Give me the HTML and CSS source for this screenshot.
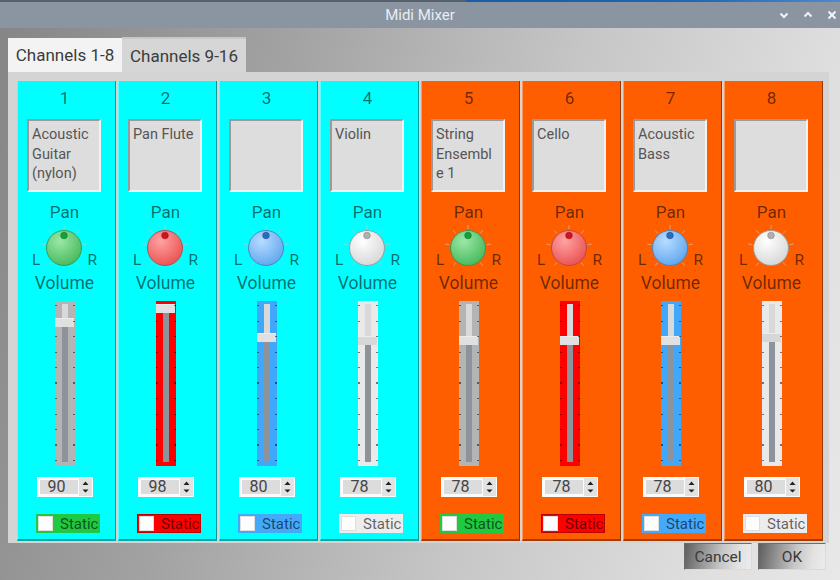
FILE: index.html
```html
<!DOCTYPE html>
<html>
<head>
<meta charset="utf-8">
<link rel="stylesheet" href="styles.css">
</head>
<body>
<svg class="defs" width="0" height="0">
  <defs>
    <radialGradient id="gGreen" cx="0.38" cy="0.3" r="0.75"><stop offset="0" stop-color="#9be8a7"/><stop offset="1" stop-color="#45b85b"/></radialGradient>
    <radialGradient id="gRed" cx="0.38" cy="0.3" r="0.75"><stop offset="0" stop-color="#ffa3a3"/><stop offset="1" stop-color="#ea5050"/></radialGradient>
    <radialGradient id="gBlue" cx="0.38" cy="0.3" r="0.75"><stop offset="0" stop-color="#b8dcff"/><stop offset="1" stop-color="#5ea6ee"/></radialGradient>
    <radialGradient id="gWhite" cx="0.38" cy="0.3" r="0.75"><stop offset="0" stop-color="#ffffff"/><stop offset="1" stop-color="#d6d6d6"/></radialGradient>
  </defs>
</svg>
<div class="topstrip"><span class="ts-blue"></span></div>
<div class="titlebar">
  <span></span>
  <span class="title">Midi Mixer</span>
  <div class="wbtns">
    <svg width="10" height="8" viewBox="0 0 10 8"><path d="M1.5 2.5 L5 6 L8.5 2.5" fill="none" stroke="#f2f4f6" stroke-width="2"/></svg>
    <svg width="10" height="8" viewBox="0 0 10 8"><path d="M1.5 5.5 L5 2 L8.5 5.5" fill="none" stroke="#f2f4f6" stroke-width="2"/></svg>
    <svg width="10" height="10" viewBox="0 0 10 10"><path d="M1.5 1.5 L8.5 8.5 M8.5 1.5 L1.5 8.5" fill="none" stroke="#f2f4f6" stroke-width="2"/></svg>
  </div>
</div>
<div class="window">
  <div class="tabs">
    <div class="tab active">Channels 1-8</div>
    <div class="tab">Channels 9-16</div>
  </div>
  <div class="pane">

    <div class="ch cyan">
      <div class="num">1</div>
      <div class="name">Acoustic<br>Guitar<br>(nylon)</div>
      <div class="lbl pan">Pan</div>
      <div class="knobrow"><span>L</span>
        <svg class="knob green" viewBox="-18 -18 36 36" width="36" height="36"><g class="ticks"><line x1="0" y1="-19" x2="0" y2="-23"/><line x1="12.2" y1="-14.6" x2="14.8" y2="-17.6"/><line x1="-12.2" y1="-14.6" x2="-14.8" y2="-17.6"/><line x1="18.7" y1="-3.3" x2="22.6" y2="-4"/><line x1="-18.7" y1="-3.3" x2="-22.6" y2="-4"/><line x1="12.2" y1="14.6" x2="14.8" y2="17.6"/><line x1="-12.2" y1="14.6" x2="-14.8" y2="17.6"/></g><circle class="body" r="17.5"/><circle class="dot" cy="-12.5" r="3.3"/></svg>
        <span>R</span></div>
      <div class="lbl vol">Volume</div>
      <div class="slider sgray" style="--pos:17px"><i class="groove"></i><i class="handle"></i></div>
      <div class="spin"><span class="val">90</span><span class="arrows"><svg width="13" height="18" viewBox="0 0 13 18"><path d="M3.5 7 L6.5 3.5 L9.5 7 Z M3.5 11.5 L9.5 11.5 L6.5 14.5 Z" fill="#222"/></svg></span></div>
      <div class="static cgreen"><span class="box"></span>Static</div>
    </div>

    <div class="ch cyan">
      <div class="num">2</div>
      <div class="name">Pan Flute</div>
      <div class="lbl pan">Pan</div>
      <div class="knobrow"><span>L</span>
        <svg class="knob red" viewBox="-18 -18 36 36" width="36" height="36"><g class="ticks"><line x1="0" y1="-19" x2="0" y2="-23"/><line x1="12.2" y1="-14.6" x2="14.8" y2="-17.6"/><line x1="-12.2" y1="-14.6" x2="-14.8" y2="-17.6"/><line x1="18.7" y1="-3.3" x2="22.6" y2="-4"/><line x1="-18.7" y1="-3.3" x2="-22.6" y2="-4"/><line x1="12.2" y1="14.6" x2="14.8" y2="17.6"/><line x1="-12.2" y1="14.6" x2="-14.8" y2="17.6"/></g><circle class="body" r="17.5"/><circle class="dot" cy="-12.5" r="3.3"/></svg>
        <span>R</span></div>
      <div class="lbl vol">Volume</div>
      <div class="slider sred" style="--pos:3px"><i class="groove"></i><i class="handle"></i></div>
      <div class="spin"><span class="val">98</span><span class="arrows"><svg width="13" height="18" viewBox="0 0 13 18"><path d="M3.5 7 L6.5 3.5 L9.5 7 Z M3.5 11.5 L9.5 11.5 L6.5 14.5 Z" fill="#222"/></svg></span></div>
      <div class="static cred"><span class="box"></span>Static</div>
    </div>

    <div class="ch cyan">
      <div class="num">3</div>
      <div class="name"></div>
      <div class="lbl pan">Pan</div>
      <div class="knobrow"><span>L</span>
        <svg class="knob blue" viewBox="-18 -18 36 36" width="36" height="36"><g class="ticks"><line x1="0" y1="-19" x2="0" y2="-23"/><line x1="12.2" y1="-14.6" x2="14.8" y2="-17.6"/><line x1="-12.2" y1="-14.6" x2="-14.8" y2="-17.6"/><line x1="18.7" y1="-3.3" x2="22.6" y2="-4"/><line x1="-18.7" y1="-3.3" x2="-22.6" y2="-4"/><line x1="12.2" y1="14.6" x2="14.8" y2="17.6"/><line x1="-12.2" y1="14.6" x2="-14.8" y2="17.6"/></g><circle class="body" r="17.5"/><circle class="dot" cy="-12.5" r="3.3"/></svg>
        <span>R</span></div>
      <div class="lbl vol">Volume</div>
      <div class="slider sblue" style="--pos:32px"><i class="groove"></i><i class="handle"></i></div>
      <div class="spin"><span class="val">80</span><span class="arrows"><svg width="13" height="18" viewBox="0 0 13 18"><path d="M3.5 7 L6.5 3.5 L9.5 7 Z M3.5 11.5 L9.5 11.5 L6.5 14.5 Z" fill="#222"/></svg></span></div>
      <div class="static cblue"><span class="box"></span>Static</div>
    </div>

    <div class="ch cyan">
      <div class="num">4</div>
      <div class="name">Violin</div>
      <div class="lbl pan">Pan</div>
      <div class="knobrow"><span>L</span>
        <svg class="knob white" viewBox="-18 -18 36 36" width="36" height="36"><g class="ticks"><line x1="0" y1="-19" x2="0" y2="-23"/><line x1="12.2" y1="-14.6" x2="14.8" y2="-17.6"/><line x1="-12.2" y1="-14.6" x2="-14.8" y2="-17.6"/><line x1="18.7" y1="-3.3" x2="22.6" y2="-4"/><line x1="-18.7" y1="-3.3" x2="-22.6" y2="-4"/><line x1="12.2" y1="14.6" x2="14.8" y2="17.6"/><line x1="-12.2" y1="14.6" x2="-14.8" y2="17.6"/></g><circle class="body" r="17.5"/><circle class="dot" cy="-12.5" r="3.3"/></svg>
        <span>R</span></div>
      <div class="lbl vol">Volume</div>
      <div class="slider slight" style="--pos:35px"><i class="groove"></i><i class="handle"></i></div>
      <div class="spin"><span class="val">78</span><span class="arrows"><svg width="13" height="18" viewBox="0 0 13 18"><path d="M3.5 7 L6.5 3.5 L9.5 7 Z M3.5 11.5 L9.5 11.5 L6.5 14.5 Z" fill="#222"/></svg></span></div>
      <div class="static clight"><span class="box"></span>Static</div>
    </div>

    <div class="ch orange">
      <div class="num">5</div>
      <div class="name">String<br>Ensembl<br>e 1</div>
      <div class="lbl pan">Pan</div>
      <div class="knobrow"><span>L</span>
        <svg class="knob green" viewBox="-18 -18 36 36" width="36" height="36"><g class="ticks"><line x1="0" y1="-19" x2="0" y2="-23"/><line x1="12.2" y1="-14.6" x2="14.8" y2="-17.6"/><line x1="-12.2" y1="-14.6" x2="-14.8" y2="-17.6"/><line x1="18.7" y1="-3.3" x2="22.6" y2="-4"/><line x1="-18.7" y1="-3.3" x2="-22.6" y2="-4"/><line x1="12.2" y1="14.6" x2="14.8" y2="17.6"/><line x1="-12.2" y1="14.6" x2="-14.8" y2="17.6"/></g><circle class="body" r="17.5"/><circle class="dot" cy="-12.5" r="3.3"/></svg>
        <span>R</span></div>
      <div class="lbl vol">Volume</div>
      <div class="slider sgray" style="--pos:35px"><i class="groove"></i><i class="handle"></i></div>
      <div class="spin"><span class="val">78</span><span class="arrows"><svg width="13" height="18" viewBox="0 0 13 18"><path d="M3.5 7 L6.5 3.5 L9.5 7 Z M3.5 11.5 L9.5 11.5 L6.5 14.5 Z" fill="#222"/></svg></span></div>
      <div class="static cgreen"><span class="box"></span>Static</div>
    </div>

    <div class="ch orange">
      <div class="num">6</div>
      <div class="name">Cello</div>
      <div class="lbl pan">Pan</div>
      <div class="knobrow"><span>L</span>
        <svg class="knob red" viewBox="-18 -18 36 36" width="36" height="36"><g class="ticks"><line x1="0" y1="-19" x2="0" y2="-23"/><line x1="12.2" y1="-14.6" x2="14.8" y2="-17.6"/><line x1="-12.2" y1="-14.6" x2="-14.8" y2="-17.6"/><line x1="18.7" y1="-3.3" x2="22.6" y2="-4"/><line x1="-18.7" y1="-3.3" x2="-22.6" y2="-4"/><line x1="12.2" y1="14.6" x2="14.8" y2="17.6"/><line x1="-12.2" y1="14.6" x2="-14.8" y2="17.6"/></g><circle class="body" r="17.5"/><circle class="dot" cy="-12.5" r="3.3"/></svg>
        <span>R</span></div>
      <div class="lbl vol">Volume</div>
      <div class="slider sred" style="--pos:35px"><i class="groove"></i><i class="handle"></i></div>
      <div class="spin"><span class="val">78</span><span class="arrows"><svg width="13" height="18" viewBox="0 0 13 18"><path d="M3.5 7 L6.5 3.5 L9.5 7 Z M3.5 11.5 L9.5 11.5 L6.5 14.5 Z" fill="#222"/></svg></span></div>
      <div class="static cred"><span class="box"></span>Static</div>
    </div>

    <div class="ch orange">
      <div class="num">7</div>
      <div class="name">Acoustic<br>Bass</div>
      <div class="lbl pan">Pan</div>
      <div class="knobrow"><span>L</span>
        <svg class="knob blue" viewBox="-18 -18 36 36" width="36" height="36"><g class="ticks"><line x1="0" y1="-19" x2="0" y2="-23"/><line x1="12.2" y1="-14.6" x2="14.8" y2="-17.6"/><line x1="-12.2" y1="-14.6" x2="-14.8" y2="-17.6"/><line x1="18.7" y1="-3.3" x2="22.6" y2="-4"/><line x1="-18.7" y1="-3.3" x2="-22.6" y2="-4"/><line x1="12.2" y1="14.6" x2="14.8" y2="17.6"/><line x1="-12.2" y1="14.6" x2="-14.8" y2="17.6"/></g><circle class="body" r="17.5"/><circle class="dot" cy="-12.5" r="3.3"/></svg>
        <span>R</span></div>
      <div class="lbl vol">Volume</div>
      <div class="slider sblue" style="--pos:35px"><i class="groove"></i><i class="handle"></i></div>
      <div class="spin"><span class="val">78</span><span class="arrows"><svg width="13" height="18" viewBox="0 0 13 18"><path d="M3.5 7 L6.5 3.5 L9.5 7 Z M3.5 11.5 L9.5 11.5 L6.5 14.5 Z" fill="#222"/></svg></span></div>
      <div class="static cblue"><span class="box"></span>Static</div>
    </div>

    <div class="ch orange">
      <div class="num">8</div>
      <div class="name"></div>
      <div class="lbl pan">Pan</div>
      <div class="knobrow"><span>L</span>
        <svg class="knob white" viewBox="-18 -18 36 36" width="36" height="36"><g class="ticks"><line x1="0" y1="-19" x2="0" y2="-23"/><line x1="12.2" y1="-14.6" x2="14.8" y2="-17.6"/><line x1="-12.2" y1="-14.6" x2="-14.8" y2="-17.6"/><line x1="18.7" y1="-3.3" x2="22.6" y2="-4"/><line x1="-18.7" y1="-3.3" x2="-22.6" y2="-4"/><line x1="12.2" y1="14.6" x2="14.8" y2="17.6"/><line x1="-12.2" y1="14.6" x2="-14.8" y2="17.6"/></g><circle class="body" r="17.5"/><circle class="dot" cy="-12.5" r="3.3"/></svg>
        <span>R</span></div>
      <div class="lbl vol">Volume</div>
      <div class="slider slight" style="--pos:32px"><i class="groove"></i><i class="handle"></i></div>
      <div class="spin"><span class="val">80</span><span class="arrows"><svg width="13" height="18" viewBox="0 0 13 18"><path d="M3.5 7 L6.5 3.5 L9.5 7 Z M3.5 11.5 L9.5 11.5 L6.5 14.5 Z" fill="#222"/></svg></span></div>
      <div class="static clight"><span class="box"></span>Static</div>
    </div>

  </div>
  <div class="buttons">
    <button class="btn">Cancel</button>
    <button class="btn">OK</button>
  </div>
</div>
</body>
</html>
```

FILE: styles.css
```css
html, body {
  margin: 0;
  padding: 0;
}
body {
  width: 840px;
  height: 580px;
  overflow: hidden;
  font-family: Roboto, "Open Sans", "DejaVu Sans", sans-serif;
  background: linear-gradient(105deg, #858585 0%, #a2a2a2 30%, #c6c6c6 60%, #dedede 85%, #e8e8e8 100%);
}

.defs {
  display: block;
  width: 0;
  height: 0;
}

.topstrip {
  height: 2px;
  display: flex;
  background: #56616e;
}
.ts-blue {
  margin-left: 466px;
  width: 374px;
  background: linear-gradient(90deg, #1c5ba6 0%, #2166b3 60%, #4f89c9 100%);
}

.titlebar {
  height: 26px;
  background: #8a95a1;
  display: grid;
  grid-template-columns: 1fr auto 1fr;
  align-items: center;
}
.title {
  color: #e9edf1;
  font-size: 15px;
  line-height: 26px;
}
.wbtns {
  justify-self: end;
  display: flex;
  align-items: center;
  gap: 14px;
  padding-right: 3px;
}
.wbtns svg {
  display: block;
}

.window {
  padding: 9px 0 0 8px;
}

.tabs {
  display: flex;
  align-items: flex-end;
  height: 35px;
}
.tab {
  box-sizing: border-box;
  height: 35px;
  width: 124px;
  background: #d6d6d6;
  border-top: 2px solid #c8c8c8;
  color: #3c3c3c;
  font-size: 17px;
  display: flex;
  align-items: center;
  justify-content: center;
}
.tab.active {
  height: 34px;
  width: 114px;
  background: #f3f3f3;
  border-top: none;
}

.pane {
  box-sizing: border-box;
  width: 821px;
  height: 471px;
  padding: 9px 0 0 9px;
  background: #d4d4d4;
  display: flex;
  gap: 2px;
}

.ch {
  box-sizing: border-box;
  width: 99px;
  height: 460px;
  padding: 7px 4px 0 0;
  border-left: 1px solid rgba(255, 255, 255, 0.35);
  border-right: 1px solid rgba(0, 0, 0, 0.4);
  border-bottom: 2px solid rgba(0, 0, 0, 0.35);
  display: flex;
  flex-direction: column;
  align-items: center;
  color: rgba(0, 0, 0, 0.58);
}
.cyan { background: #00ffff; }
.orange { background: #ff5e00; }

.num {
  font-size: 17px;
  line-height: 20px;
  height: 20px;
}

.name {
  box-sizing: border-box;
  margin-top: 11px;
  width: 74px;
  height: 73px;
  background: #dddddd;
  border: 2px solid;
  border-color: #9a9a9a #f2f2f2 #f2f2f2 #9a9a9a;
  padding: 4px 2px 0 3px;
  font-size: 14.5px;
  line-height: 19.5px;
  color: #555;
  white-space: nowrap;
  overflow: hidden;
  align-self: flex-start;
  margin-left: 9px;
}

.lbl {
  font-size: 17px;
  line-height: 20px;
  height: 20px;
}
.pan { margin-top: 10px; }
.vol { margin-top: 7px; font-size: 17.5px; }

.knobrow {
  margin-top: 8px;
  height: 36px;
  display: flex;
  align-items: flex-end;
  font-size: 15.5px;
  line-height: 14px;
}
.knobrow span {
  position: relative;
  top: 1px;
}
.knob {
  display: block;
  overflow: visible;
  margin: 0 5px 0 6px;
}
.knob .ticks line {
  stroke: #c4c4c4;
  stroke-opacity: 0.7;
  stroke-width: 1;
}
.knob .body { stroke-width: 0.9; }
.knob.green .body { fill: url(#gGreen); stroke: #3a9549; }
.knob.green .dot { fill: #15a03a; stroke: #0f7a2a; stroke-width: 0.6; }
.knob.red .body { fill: url(#gRed); stroke: #b44646; }
.knob.red .dot { fill: #d0141c; stroke: #9c1016; stroke-width: 0.6; }
.knob.blue .body { fill: url(#gBlue); stroke: #4782bd; }
.knob.blue .dot { fill: #2b6bbd; stroke: #1f4f8c; stroke-width: 0.6; }
.knob.white .body { fill: url(#gWhite); stroke: #979797; }
.knob.white .dot { fill: #b0b0b0; stroke: #858585; stroke-width: 0.6; }

.slider {
  position: relative;
  margin-top: 8px;
  width: 20px;
  height: 165px;
}
.slider::before,
.slider::after {
  content: "";
  position: absolute;
  top: 4px;
  bottom: 4px;
  width: 2px;
  background: repeating-linear-gradient(to bottom, rgba(0, 0, 0, 0.5) 0 1px, transparent 1px 15.5px);
}
.slider::before { left: 0; }
.slider::after { right: 0; }
.sgray { background: #b4b4b4; }
.sred { background: #ff0000; }
.sblue { background: #40a8fb; }
.slight { background: #e9e9e9; }

.groove {
  position: absolute;
  left: 7px;
  width: 6px;
  top: 3px;
  bottom: 4px;
  background: linear-gradient(to bottom, #d9d9d9 var(--pos), #8c939b var(--pos));
}
.handle {
  position: absolute;
  left: 0;
  right: 1px;
  top: var(--pos);
  height: 8px;
  background: #e0e0e0;
  border-top: 1px solid #ececec;
}
.slight .handle { background: #d7d7d7; }

.spin {
  box-sizing: border-box;
  margin-top: 11px;
  width: 56px;
  height: 20px;
  background: #fbfbfb;
  display: flex;
  align-items: center;
  padding: 0 1px 0 3px;
}
.val {
  width: 39px;
  height: 14px;
  background: #dcdcdc;
  font-size: 16px;
  line-height: 14px;
  text-align: center;
  color: #444;
  padding-right: 4px;
  box-sizing: border-box;
}
.arrows {
  margin-left: 1px;
  width: 13px;
  height: 18px;
  background: #e2e2e2;
}
.arrows svg { display: block; }

.static {
  box-sizing: border-box;
  margin-top: 17px;
  align-self: flex-start;
  margin-left: 18px;
  width: 64px;
  height: 19px;
  display: flex;
  align-items: center;
  gap: 7px;
  padding-left: 2px;
  font-size: 15px;
  color: rgba(0, 0, 0, 0.6);
  white-space: nowrap;
}
.static .box {
  box-sizing: border-box;
  flex: none;
  width: 15px;
  height: 15px;
  background: #fdfdfd;
  border: 1px solid rgba(0, 0, 0, 0.12);
}
.cgreen { background: #20c941; }
.cred { background: #ff0000; border: 1px solid #b80000; padding-left: 1px; }
.cblue { background: #45a9fb; }
.clight { background: #ececec; }

.buttons {
  display: flex;
  justify-content: flex-end;
  gap: 6px;
  padding-right: 14px;
}
.btn {
  width: 68px;
  height: 27px;
  font-family: Roboto, "Open Sans", sans-serif;
  font-size: 15.5px;
  color: #3a3a3a;
  border: 1px solid;
  border-color: #6c6c6c #dadada #dadada #6c6c6c;
  background: linear-gradient(100deg, #5e5e5e 0%, #8e8e8e 25%, #c6c6c6 55%, #e2e2e2 80%, #ececec 100%);
  padding: 0;
}
```
